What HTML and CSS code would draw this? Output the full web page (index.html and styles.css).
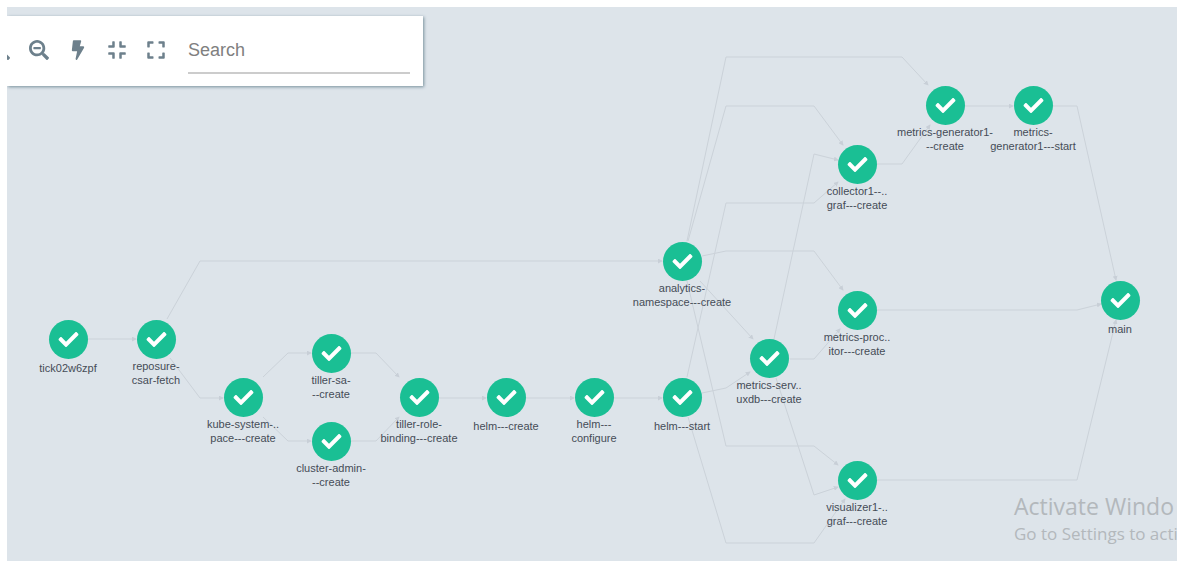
FILE: index.html
```html
<!DOCTYPE html>
<html lang="en">
<head>
    <meta charset="UTF-8">
    <meta name="viewport" content="width=device-width, initial-scale=1.0">
    <title>Workflow</title>
    <link rel="stylesheet" href="styles.css">
</head>
<body>
    <main class="canvas">
        <svg class="graph" viewBox="7 7 1170 554">
            <defs>
                <marker id="arrow" viewBox="0 0 6 6" refX="5" refY="3" markerWidth="5" markerHeight="5" orient="auto">
                    <path d="M0 0L6 3L0 6z"/>
                </marker>
                <g id="done">
                    <circle cx=".5" cy=".5" r="19.5"/>
                    <path transform="translate(.5 .5) scale(.039) translate(-256 -256)" d="M173.898 439.404l-166.4-166.4c-9.997-9.997-9.997-26.206 0-36.204l36.203-36.204c9.997-9.998 26.207-9.998 36.204 0L192 312.69 432.095 72.596c9.997-9.997 26.207-9.997 36.204 0l36.203 36.204c9.997 9.997 9.997 26.206 0 36.204l-294.4 294.401c-9.998 9.997-26.207 9.997-36.204-.001z"/>
                </g>
            </defs>

            <!-- connections -->
            <g class="edges">
                <polyline points="88,339 136,339"/>
                <polyline points="167,319 200,261 662,261"/>
                <polyline points="170,358 200,398 223,398"/>
                <polyline points="263,377 288,353 311,353"/>
                <polyline points="263,417 288,441 311,441"/>
                <polyline points="351,353 376,353 399,377"/>
                <polyline points="351,441 376,441 399,417"/>
                <polyline points="439,398 486,398"/>
                <polyline points="526,398 574,398"/>
                <polyline points="614,398 662,398"/>
                <polyline points="687,241 726,57 902,57 928,85"/>
                <polyline points="688,241 726,106 814,106 843,145"/>
                <polyline points="702,256 726,251 814,251 843,290"/>
                <polyline points="700,281 753,339"/>
                <polyline points="687,281 726,446 814,446 838,465"/>
                <polyline points="687,377 726,203 814,203 838,182"/>
                <polyline points="702,393 726,388 750,372"/>
                <polyline points="688,417 726,543 814,543 845,499"/>
                <polyline points="774,339 814,154 838,160"/>
                <polyline points="790,359 814,359 840,329"/>
                <polyline points="776,378 814,495 838,487"/>
                <polyline points="877,164 902,164 930,125"/>
                <polyline points="965,106 1013,106"/>
                <polyline points="1053,106 1077,106 1116,280"/>
                <polyline points="877,310 1077,310 1101,304"/>
                <polyline points="877,480 1077,480 1116,320"/>
            </g>

            <!-- operations -->
            <g class="node" transform="translate(68 339)">
                <use href="#done"/>
                <text y="33">tick02w6zpf</text>
            </g>
            <g class="node" transform="translate(156 339)">
                <use href="#done"/>
                <text y="31">reposure-</text>
                <text y="45">csar-fetch</text>
            </g>
            <g class="node" transform="translate(243 397)">
                <use href="#done"/>
                <text y="31">kube-system-..</text>
                <text y="45">pace---create</text>
            </g>
            <g class="node" transform="translate(331 353)">
                <use href="#done"/>
                <text y="31">tiller-sa-</text>
                <text y="45">--create</text>
            </g>
            <g class="node" transform="translate(331 441)">
                <use href="#done"/>
                <text y="31">cluster-admin-</text>
                <text y="45">--create</text>
            </g>
            <g class="node" transform="translate(419 397)">
                <use href="#done"/>
                <text y="31">tiller-role-</text>
                <text y="45">binding---create</text>
            </g>
            <g class="node" transform="translate(506 397)">
                <use href="#done"/>
                <text y="33">helm---create</text>
            </g>
            <g class="node" transform="translate(594 397)">
                <use href="#done"/>
                <text y="31">helm---</text>
                <text y="45">configure</text>
            </g>
            <g class="node" transform="translate(682 397)">
                <use href="#done"/>
                <text y="33">helm---start</text>
            </g>
            <g class="node" transform="translate(682 261)">
                <use href="#done"/>
                <text y="31">analytics-</text>
                <text y="45">namespace---create</text>
            </g>
            <g class="node" transform="translate(769 358)">
                <use href="#done"/>
                <text y="31">metrics-serv..</text>
                <text y="45">uxdb---create</text>
            </g>
            <g class="node" transform="translate(857 164)">
                <use href="#done"/>
                <text y="31">collector1--..</text>
                <text y="45">graf---create</text>
            </g>
            <g class="node" transform="translate(857 310)">
                <use href="#done"/>
                <text y="31">metrics-proc..</text>
                <text y="45">itor---create</text>
            </g>
            <g class="node" transform="translate(857 480)">
                <use href="#done"/>
                <text y="31">visualizer1-..</text>
                <text y="45">graf---create</text>
            </g>
            <g class="node" transform="translate(945 105)">
                <use href="#done"/>
                <text y="31">metrics-generator1-</text>
                <text y="45">--create</text>
            </g>
            <g class="node" transform="translate(1033 105)">
                <use href="#done"/>
                <text y="31">metrics-</text>
                <text y="45">generator1---start</text>
            </g>
            <g class="node" transform="translate(1120 300)">
                <use href="#done"/>
                <text y="33">main</text>
            </g>
        </svg>

        <div class="toolbar">
            <button type="button" aria-label="Zoom in">
                <svg viewBox="0 0 512 512"><path d="M304 192v32c0 6.6-5.4 12-12 12h-56v56c0 6.6-5.4 12-12 12h-32c-6.6 0-12-5.4-12-12v-56h-56c-6.6 0-12-5.4-12-12v-32c0-6.6 5.4-12 12-12h56v-56c0-6.6 5.4-12 12-12h32c6.6 0 12 5.4 12 12v56h56c6.6 0 12 5.4 12 12zm201 284.7L476.7 505c-9.4 9.4-24.6 9.4-33.9 0L343 405.3c-4.5-4.5-7-10.6-7-17V372c-35.3 27.6-79.7 44-128 44C93.1 416 0 322.9 0 208S93.1 0 208 0s208 93.1 208 208c0 48.3-16.4 92.7-44 128h16.3c6.4 0 12.5 2.5 17 7l99.7 99.7c9.3 9.4 9.3 24.6 0 34zM344 208c0-75.2-60.8-136-136-136S72 132.8 72 208s60.8 136 136 136 136-60.8 136-136z"/></svg>
            </button>
            <button type="button" aria-label="Zoom out">
                <svg viewBox="0 0 512 512"><path d="M304 192v32c0 6.6-5.4 12-12 12H124c-6.6 0-12-5.4-12-12v-32c0-6.6 5.4-12 12-12h168c6.6 0 12 5.4 12 12zm201 284.7L476.7 505c-9.4 9.4-24.6 9.4-33.9 0L343 405.3c-4.5-4.5-7-10.6-7-17V372c-35.3 27.6-79.7 44-128 44C93.1 416 0 322.9 0 208S93.1 0 208 0s208 93.1 208 208c0 48.3-16.4 92.7-44 128h16.3c6.4 0 12.5 2.5 17 7l99.7 99.7c9.3 9.4 9.3 24.6 0 34zM344 208c0-75.2-60.8-136-136-136S72 132.8 72 208s60.8 136 136 136 136-60.8 136-136z"/></svg>
            </button>
            <button type="button" aria-label="Run layout">
                <svg viewBox="-96 0 512 512"><path d="M270 160H206l36-128Q244 4 220 4H50Q32 4 30 22L2 260q0 24 24 26h112L98 482q-2 24 20 28 14 0 22-14L316 196q10-32-20-36z"/></svg>
            </button>
            <button type="button" aria-label="Compress">
                <svg viewBox="0 0 512 512"><path d="M32 156q0-22 12-22h90V44q0-12 12-12h40q12 0 12 12v130q0 24-24 24H44q-12 0-12-12zM480 156q0-22-12-22h-90V44q0-12-12-12h-40q-12 0-12 12v130q0 24 24 24h130q12 0 12-12zM32 356q0 22 12 22h90v90q0 12 12 12h40q12 0 12-12V338q0-24-24-24H44q-12 0-12 12zM480 356q0 22-12 22h-90v90q0 12-12 12h-40q-12 0-12-12V338q0-24 24-24h130q12 0 12 12z"/></svg>
            </button>
            <button type="button" aria-label="Fit to screen">
                <svg viewBox="0 0 512 512"><path d="M32 180V56q0-24 24-24h124q12 0 12 12v40q0 12-12 12H96v84q0 12-12 12H44q-12 0-12-12zM480 180V56q0-24-24-24H332q-12 0-12 12v40q0 12 12 12h84v84q0 12 12 12h40q12 0 12-12zM32 332v124q0 24 24 24h124q12 0 12-12v-40q0-12-12-12H96v-84q0-12-12-12H44q-12 0-12 12zM480 332v124q0 24-24 24H332q-12 0-12-12v-40q0-12 12-12h84v-84q0-12 12-12h40q12 0 12 12z"/></svg>
            </button>
            <input class="search" type="text" placeholder="Search" aria-label="Search">
        </div>

        <div class="watermark">
            <p class="watermark-title">Activate Windo</p>
            <p class="watermark-text">Go to Settings to acti</p>
        </div>
    </main>
</body>
</html>
```
FILE: styles.css
```css
body {
    margin: 7px 10px 11px 7px;
    background-color: #ffffff;
    font-family: "Liberation Sans", Arial, sans-serif;
}
.canvas {
    position: relative;
    overflow: hidden;
    background-color: #dde4ea;
}
.graph {
    display: block;
    width: 100%;
    height: auto;
}
.edges polyline {
    fill: none;
    stroke: #cbd2d9;
    stroke-width: 1px;
    marker-end: url(#arrow);
}
#arrow path {
    fill: #c8cfd7;
}
#done circle {
    fill: #1abf94;
}
#done path {
    fill: #ffffff;
}
.node text {
    font-size: 11px;
    fill: #454c57;
    text-anchor: middle;
}

/* floating toolbar */
.toolbar {
    position: absolute;
    top: 9px;
    left: 0;
    display: flex;
    justify-content: flex-end;
    align-items: center;
    box-sizing: border-box;
    width: 416px;
    height: 70px;
    padding-right: 13px;
    overflow: hidden;
    background-color: #ffffff;
    box-shadow: 1px 1px 3px #78909c;
}
.toolbar button {
    display: flex;
    flex: none;
    justify-content: center;
    width: 39px;
    padding: 0 0 2px;
    border: 0;
    background: none;
    cursor: pointer;
}
.toolbar svg {
    width: 20px;
    height: 20px;
    fill: #6d808c;
}
.search {
    flex: none;
    box-sizing: border-box;
    width: 222px;
    height: 46px;
    margin-left: 13px;
    padding: 0;
    border: 0;
    border-bottom: 2px solid #cccccc;
    outline: none;
    background: none;
    font-family: inherit;
    font-size: 18px;
}
.search::placeholder {
    color: #808080;
}

.watermark {
    position: absolute;
    right: 0;
    bottom: 14px;
    width: 163px;
    color: #b3b8bc;
    font-family: "Open Sans", "Noto Sans", sans-serif;
    white-space: nowrap;
}
.watermark p {
    margin: 0;
}
.watermark-title {
    font-size: 23px;
    line-height: 30px;
}
.watermark-text {
    font-size: 17px;
    line-height: 26px;
}
```
